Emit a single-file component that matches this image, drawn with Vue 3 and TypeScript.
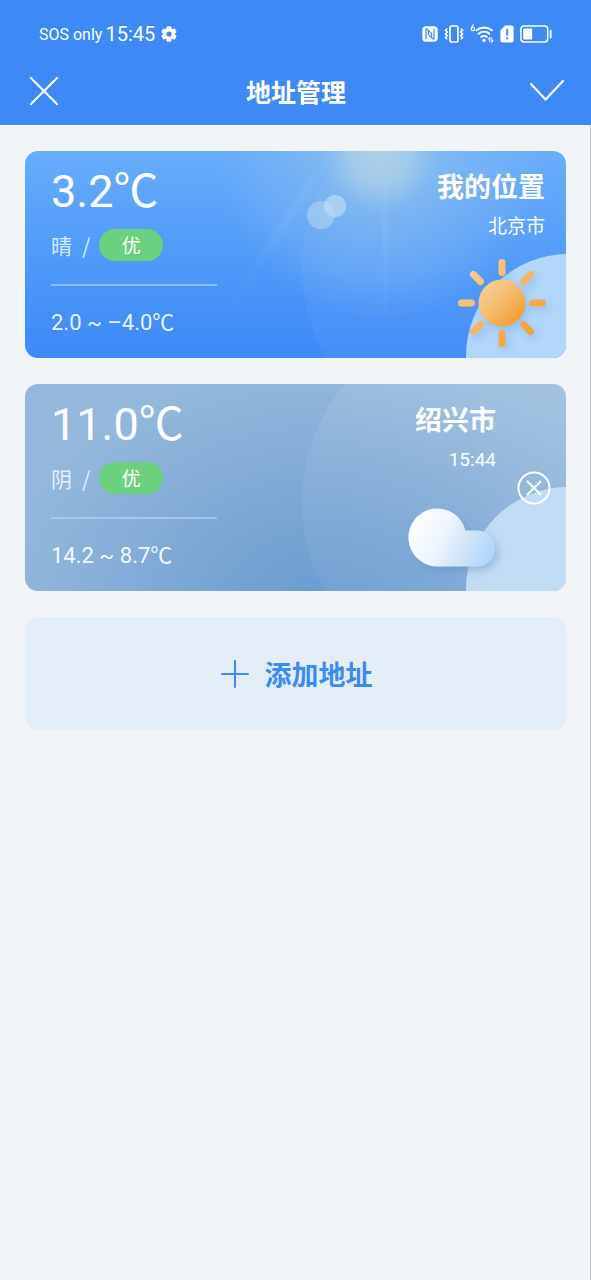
<script setup lang="ts">
import { ref } from 'vue'

interface Place {
  id: number
  name: string
  detail: string
  temperature: string
  condition: string
  air: string
  range: string
  sky: 'sunny' | 'cloudy'
  removable: boolean
}

const places = ref<Place[]>([
  { id: 1, name: '我的位置', detail: '北京市', temperature: '3.2℃', condition: '晴', air: '优', range: '2.0 ~ –4.0℃', sky: 'sunny', removable: false },
  { id: 2, name: '绍兴市', detail: '15:44', temperature: '11.0℃', condition: '阴', air: '优', range: '14.2 ~ 8.7℃', sky: 'cloudy', removable: true },
])

const rayAngles = [0, 45, 90, 135, 180, 225, 270, 315]

function remove(id: number) {
  places.value = places.value.filter((p) => p.id !== id)
}
</script>

<template>
  <div class="screen">
    <header class="top">
      <div class="status">
        <span class="carrier">SOS only</span>
        <span class="clock">15:45</span>
        <svg class="gear" width="16" height="16" viewBox="0 0 16 16" aria-hidden="true">
          <g fill="#fff">
            <rect v-for="a in [0, 60, 120]" :key="a" x="5.5" y="0.3" width="5" height="15.4" rx="1.3" :transform="`rotate(${a} 8 8)`" />
            <circle cx="8" cy="8" r="6" />
          </g>
          <circle cx="8" cy="8" r="2.6" fill="#3d8af7" />
        </svg>
        <div class="indicators">
          <svg width="16" height="16" viewBox="0 0 16 16" aria-hidden="true">
            <rect x="0.3" y="0.3" width="15.4" height="15.4" rx="3.6" fill="#fff" />
            <path d="M4 13.2V3.2Q4 2.400 4.800 3L9.600 7.400V11.600M12 2.8V12.8Q12 13.600 11.200 13L6.400 8.600V4.400" fill="none" stroke="#3d8af7" stroke-width="1.2" />
          </svg>
          <svg width="20" height="18" viewBox="0 0 20 18" fill="none" stroke="#fff" aria-hidden="true">
            <rect x="6" y="1" width="8" height="16" rx="1.8" stroke-width="1.7" />
            <path d="M3.3 3.5L1.4 5.3L3.3 7.1L1.4 8.9L3.3 10.7L1.4 12.5L3.3 14.3M16.7 3.5L18.6 5.3L16.7 7.1L18.6 8.9L16.7 10.7L18.6 12.5L16.7 14.3" stroke-width="1.5" />
          </svg>
          <svg width="24" height="20" viewBox="0 0 24 20" fill="none" stroke="#fff" aria-hidden="true">
            <path d="M3.800 0.500Q1.200 2.400 1.200 5" stroke-width="1.1" />
            <circle cx="2.900" cy="5" r="1.700" stroke-width="1.1" />
            <path d="M6.400 6.400A12 12 0 0 1 22 6.400M8.600 9.800A7.8 7.8 0 0 1 19.400 9.800M11.200 13A4 4 0 0 1 16.800 13" stroke-width="1.9" stroke-linecap="round" />
            <circle cx="14" cy="16.4" r="1.7" fill="#fff" stroke="none" />
            <path d="M19.8 18V13.6L18.2 15.4M21.8 13.6V18L23.4 16.2" stroke-width="1.1" />
          </svg>
          <svg width="14" height="18" viewBox="0 0 14 18" aria-hidden="true">
            <path d="M5.2 0.4H11.6Q13.6 0.4 13.6 2.4V15.6Q13.6 17.6 11.6 17.6H2.4Q0.4 17.6 0.4 15.6V5.2Z" fill="#fff" />
            <path d="M7.2 4V10.5M7.2 12.3V14.3" stroke="#3d8af7" stroke-width="2" />
          </svg>
          <svg width="32" height="18" viewBox="0 0 32 18" aria-hidden="true">
            <rect x="0.9" y="1" width="26.8" height="16" rx="3.2" fill="none" stroke="#fff" stroke-width="1.5" />
            <rect x="3.2" y="3.6" width="9" height="10.8" rx="1" fill="#fff" />
            <rect x="29.8" y="4.8" width="1.8" height="8.6" rx="0.9" fill="#fff" />
          </svg>
        </div>
      </div>
      <nav class="bar">
        <button class="icon-btn" type="button" aria-label="关闭">
          <svg width="30" height="30" viewBox="0 0 30 30"><path d="M2 2L28 28M28 2L2 28" fill="none" stroke="#fff" stroke-width="2.2" stroke-linecap="round" /></svg>
        </button>
        <h1>地址管理</h1>
        <button class="icon-btn" type="button" aria-label="完成">
          <svg width="36" height="24" viewBox="0 0 36 24"><path d="M2 5L16.5 20.5L34 2" fill="none" stroke="#fff" stroke-width="2.2" stroke-linecap="round" stroke-linejoin="round" /></svg>
        </button>
      </nav>
    </header>

    <main class="list">
      <article v-for="p in places" :key="p.id" class="card" :class="p.sky">
        <svg v-if="p.sky === 'sunny'" class="art" viewBox="0 0 541 207" preserveAspectRatio="xMaxYMid slice" aria-hidden="true">
          <defs>
            <linearGradient id="skyDay" x1="0" y1="0" x2="0" y2="1">
              <stop offset="0" stop-color="#68adfb" />
              <stop offset="0.45" stop-color="#529cf9" />
              <stop offset="1" stop-color="#3d89f8" />
            </linearGradient>
            <radialGradient id="glow" gradientUnits="userSpaceOnUse" cx="355" cy="4" r="165">
              <stop offset="0" stop-color="#b2d1e6" stop-opacity="0.95" />
              <stop offset="0.18" stop-color="#aacee8" stop-opacity="0.85" />
              <stop offset="0.36" stop-color="#8abdee" stop-opacity="0.65" />
              <stop offset="0.75" stop-color="#7eb6f2" stop-opacity="0.36" />
              <stop offset="1" stop-color="#78b2f5" stop-opacity="0" />
            </radialGradient>
            <linearGradient id="halo" x1="0" y1="0" x2="0" y2="1">
              <stop offset="0" stop-color="#fff" stop-opacity="0" />
              <stop offset="0.5" stop-color="#fff" stop-opacity="0.03" />
              <stop offset="1" stop-color="#fff" stop-opacity="0.06" />
            </linearGradient>
            <linearGradient id="beam" x1="0" y1="0" x2="0" y2="1">
              <stop offset="0" stop-color="#fff" stop-opacity="0" />
              <stop offset="0.4" stop-color="#fff" stop-opacity="0.05" />
              <stop offset="1" stop-color="#fff" stop-opacity="0" />
            </linearGradient>
            <linearGradient id="sunFill" x1="0.1" y1="0.15" x2="0.85" y2="0.9">
              <stop offset="0" stop-color="#f6cd90" />
              <stop offset="0.45" stop-color="#f4bd70" />
              <stop offset="1" stop-color="#f29c2d" />
            </linearGradient>
            <linearGradient id="rayFill" gradientUnits="userSpaceOnUse" x1="446" y1="121" x2="508" y2="183">
              <stop offset="0" stop-color="#f6cb8b" />
              <stop offset="1" stop-color="#f1a03a" />
            </linearGradient>
            <filter id="sunShadow" x="-30%" y="-30%" width="170%" height="170%">
              <feDropShadow dx="3" dy="4" stdDeviation="4" flood-color="#5d92cc" flood-opacity="0.38" />
            </filter>
            <mask id="rays">
              <rect v-for="a in rayAngles" :key="a" x="473.5" y="108" width="7" height="17" rx="3.5" fill="#fff" :transform="`rotate(${a} 477 152)`" />
            </mask>
          </defs>
          <rect width="541" height="207" fill="url(#skyDay)" />
          <circle cx="355" cy="4" r="165" fill="url(#glow)" />
          <path d="M300 0H312L205 165L198 160Z" fill="url(#beam)" />
          <path d="M357 0H365L362 195H358Z" fill="url(#beam)" />
          <circle cx="462" cy="116" r="185" fill="url(#halo)" />
          <circle cx="296" cy="64" r="14" fill="#b0d2f1" fill-opacity="0.62" />
          <circle cx="310" cy="55" r="11" fill="#b9d8f6" fill-opacity="0.75" />
          <circle cx="543" cy="205" r="102" fill="#b3d7fa" />
          <g filter="url(#sunShadow)">
            <rect x="430" y="105" width="94" height="94" fill="url(#rayFill)" mask="url(#rays)" />
            <circle cx="477" cy="152" r="23.5" fill="url(#sunFill)" />
          </g>
        </svg>
        <svg v-else class="art" viewBox="0 0 541 207" preserveAspectRatio="xMaxYMid slice" aria-hidden="true">
          <defs>
            <radialGradient id="skyGrey" gradientUnits="userSpaceOnUse" cx="0" cy="0" r="1" gradientTransform="translate(300 222) scale(330 240)">
              <stop offset="0" stop-color="#6b9cd0" />
              <stop offset="0.3" stop-color="#75a3d2" />
              <stop offset="0.7" stop-color="#88afd8" />
              <stop offset="1" stop-color="#93b8dc" />
            </radialGradient>
            <linearGradient id="haze" x1="0.65" y1="0" x2="0.35" y2="1">
              <stop offset="0.1" stop-color="#c8daee" stop-opacity="0.36" />
              <stop offset="0.45" stop-color="#b0cae6" stop-opacity="0.22" />
              <stop offset="0.8" stop-color="#a0c0e4" stop-opacity="0.14" />
            </linearGradient>
            <linearGradient id="cloudFill" x1="0.05" y1="0.4" x2="1" y2="0.7">
              <stop offset="0" stop-color="#fbfdff" />
              <stop offset="0.35" stop-color="#edf5fd" />
              <stop offset="0.65" stop-color="#d0e5f8" />
              <stop offset="1" stop-color="#b1d7fa" />
            </linearGradient>
            <filter id="cloudShadow" x="-20%" y="-20%" width="150%" height="160%">
              <feDropShadow dx="3" dy="4" stdDeviation="4" flood-color="#5585bd" flood-opacity="0.4" />
            </filter>
          </defs>
          <rect width="541" height="207" fill="url(#skyGrey)" />
          <circle cx="462" cy="118" r="185" fill="url(#haze)" />
          <circle cx="543" cy="205" r="102" fill="#c1dcf4" />
          <path d="M412 182.500A29 29 0 1 1 440.500 146.500H452A18 18 0 0 1 452 182.500Z" fill="url(#cloudFill)" filter="url(#cloudShadow)" />
        </svg>

        <section class="weather">
          <p class="temp">{{ p.temperature }}</p>
          <p class="cond">
            <span>{{ p.condition }}</span><span class="slash">/</span><span class="air">{{ p.air }}</span>
          </p>
          <hr />
          <p class="range">{{ p.range }}</p>
        </section>
        <section class="place">
          <h2>{{ p.name }}</h2>
          <p>{{ p.detail }}</p>
        </section>
        <button v-if="p.removable" class="icon-btn remove" type="button" aria-label="删除" @click="remove(p.id)">
          <svg width="34" height="34" viewBox="0 0 34 34" fill="none" stroke="#fff" stroke-linecap="round">
            <circle cx="17" cy="17" r="15.500" stroke-width="2" />
            <path d="M10.500 10.500L23.500 23.500M23.500 10.500L10.500 23.500" stroke-width="2" />
          </svg>
        </button>
      </article>

      <button class="add" type="button">
        <svg width="30" height="30" viewBox="0 0 30 30" aria-hidden="true"><path d="M16 2V28M3 15H29" fill="none" stroke="#3d8af0" stroke-width="2" stroke-linecap="round" /></svg>
        <span>添加地址</span>
      </button>
    </main>
  </div>
</template>

<style>
body {
  margin: 0;
  background: #f0f4f7;
}
</style>

<style scoped>
.screen {
  box-sizing: border-box;
  min-height: 100vh;
  border-right: 1px solid #c3c8cd;
  background: #f0f4f7;
  color: #fff;
  font-family: Roboto, "Noto Sans CJK SC", sans-serif;
}
h1,
h2,
p,
hr {
  margin: 0;
}
h1,
h2,
.cond {
  font-family: "Noto Sans CJK SC", sans-serif;
}
.icon-btn {
  display: flex;
  padding: 0;
  border: 0;
  background: none;
  cursor: pointer;
}
.top {
  box-sizing: border-box;
  height: 125px;
  padding-top: 18px;
  margin-right: -1px;
  background: #3d8af7;
}
.status {
  display: flex;
  align-items: center;
  height: 32px;
  padding: 0 39px;
}
.carrier {
  font-size: 16px;
}
.clock {
  margin: 0 6px 0 3px;
  font-size: 20px;
}
.indicators {
  display: flex;
  align-items: center;
  gap: 6px;
  margin-left: auto;
}
.bar {
  display: flex;
  align-items: center;
  justify-content: space-between;
  height: 81px;
  padding: 0 26px 0 29px;
}
h1 {
  padding-left: 4px;
  font-size: 25px;
  line-height: 36px;
}
.list {
  display: flex;
  flex-direction: column;
  gap: 26px;
  padding: 26px 24px 26px 25px;
}
.card {
  position: relative;
  display: flex;
  overflow: hidden;
  border-radius: 13px;
}
.art {
  position: absolute;
  inset: 0;
  width: 100%;
  height: 100%;
}
.weather {
  position: relative;
  flex: 1;
  padding: 16px 0 20px 26px;
}
.temp {
  font-size: 45px;
  line-height: 50px;
}
.cond {
  display: flex;
  align-items: center;
  height: 32px;
  margin-top: 12px;
  font-size: 21px;
  color: rgba(255, 255, 255, 0.8);
}
.slash {
  margin: 0 9px 0 10px;
}
.air {
  width: 64px;
  border-radius: 16px;
  background: #6bd17f;
  color: #fff;
  font-size: 19px;
  line-height: 32px;
  text-align: center;
}
hr {
  width: 166px;
  height: 2px;
  margin: 23px 0 22px;
  border: 0;
  background: rgba(190, 220, 255, 0.55);
}
.range {
  font-size: 22px;
  line-height: 30px;
  color: rgba(255, 255, 255, 0.92);
}
.place {
  position: relative;
  padding: 18px 21px 0 0;
  text-align: right;
}
h2 {
  font-size: 27px;
  line-height: 34px;
}
.place p {
  margin-top: 9px;
  font-size: 19px;
  line-height: 30px;
}
.remove {
  position: relative;
  align-self: center;
  margin-right: 15px;
}
.add {
  display: flex;
  align-items: center;
  justify-content: center;
  gap: 16px;
  height: 113px;
  padding: 0;
  border: 0;
  border-radius: 13px;
  background: #e4eef9;
  color: #3d8af0;
  font-family: inherit;
  font-size: 27px;
  font-weight: 700;
  cursor: pointer;
}
</style>
